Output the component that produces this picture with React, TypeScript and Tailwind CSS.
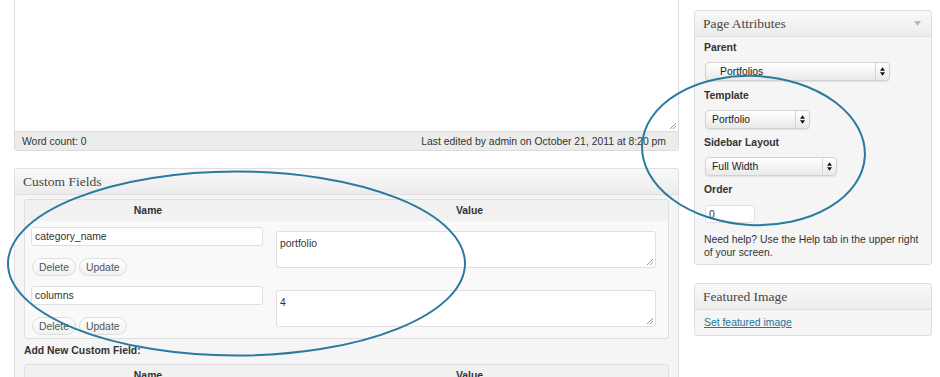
import React from "react";

function Grip({ className }: { className?: string }) {
  return (
    <svg className={className} width="8" height="8" viewBox="0 0 8 8">
      <path d="M1 7 L7 1 M4 7 L7 4" stroke="#9a9a9a" strokeWidth="1" fill="none" />
    </svg>
  );
}

function Arrows() {
  return (
    <svg width="5" height="9" viewBox="0 0 5 9">
      <path d="M0 3.8 L2.5 0.3 L5 3.8 Z M0 5.2 L2.5 8.7 L5 5.2 Z" fill="#111" />
    </svg>
  );
}

function Select({ className, text, textClass }: { className: string; text: string; textClass: string }) {
  return (
    <div
      className={`ml-[1px] h-[19px] flex items-stretch rounded-[4px] border border-[#d2d2d2] bg-linear-to-b from-[#ffffff] to-[#e9e9e9] shadow-[0_1px_1px_rgba(0,0,0,0.08)] ${className}`}
    >
      <div className={`flex-1 flex items-center text-[#222] ${textClass}`}>{text}</div>
      <div className="w-[14px] border-l border-[#d6d6d6] flex items-center justify-center">
        <Arrows />
      </div>
    </div>
  );
}

function Btn({ label }: { label: string }) {
  return (
    <div className="h-[18px] px-[6px] flex items-center rounded-full border border-[#dedede] bg-linear-to-b from-[#fefefe] to-[#f1f1f1] text-[#555]">
      {label}
    </div>
  );
}

function TextArea({ text }: { text: string }) {
  return (
    <div className="relative h-[37px] rounded-[3px] border border-[#dfdfdf] bg-white px-[3px] pt-[5px] text-[#333]">
      {text}
      <Grip className="absolute right-[1px] bottom-[1px]" />
    </div>
  );
}

function FieldRow({ name, value, pt }: { name: string; value: string; pt: string }) {
  return (
    <div className={`flex ${pt}`}>
      <div className="w-[246px] pl-[6px] pr-[8px]">
        <div className="h-[19px] w-[232px] rounded-[3px] border border-[#dfdfdf] bg-white flex items-center pl-[3px] text-[#333]">
          {name}
        </div>
        <div className="flex gap-[3px] mt-[12px] ml-[1px]">
          <Btn label="Delete" />
          <Btn label="Update" />
        </div>
      </div>
      <div className="flex-1 pl-[5px] pr-[12px] pt-[4px]">
        <TextArea text={value} />
      </div>
    </div>
  );
}

function BoxHeader({ title, arrow }: { title: string; arrow?: boolean }) {
  return (
    <div className="h-[26px] flex items-center justify-between pl-[8px] pr-[10px] border-b border-[#dfdfdf] bg-linear-to-b from-[#f9f9f9] to-[#ececec] rounded-t-[3px]">
      <span className="font-['Liberation_Serif',Georgia,serif] text-[13.5px] text-[#464646]">{title}</span>
      {arrow && (
        <svg width="7" height="5" viewBox="0 0 7 5">
          <path d="M0 0 L7 0 L3.5 5 Z" fill="#b8b8b8" />
        </svg>
      )}
    </div>
  );
}

export default function App() {
  return (
    <div className="relative w-[940px] h-[377px] overflow-hidden bg-white font-['Liberation_Sans',Arial,sans-serif] text-[10.4px] leading-[13px] text-[#333]">
      <div className="flex pl-[14px] gap-[15px]">
        {/* Left column */}
        <div className="w-[665px] flex flex-col">
          {/* Editor */}
          <div className="border-x border-b border-[#dcdcdc] rounded-b-[3px]">
            <div className="relative h-[131px] bg-white">
              <Grip className="absolute right-[1px] bottom-[1px]" />
            </div>
            <div className="h-[19px] flex items-center justify-between pl-[7px] pr-[12px] bg-[#ececec] border-t border-[#dcdcdc] text-[#333]">
              <span>Word count: 0</span>
              <span>Last edited by admin on October 21, 2011 at 8:20 pm</span>
            </div>
          </div>

          {/* Custom Fields */}
          <div className="mt-[17px] border border-[#dfdfdf] rounded-[3px] bg-[#f5f5f5]">
            <BoxHeader title="Custom Fields" />
            <div className="px-[9px] pt-[4px]">
              <div className="border border-[#dfdfdf] rounded-[3px] bg-[#f9f9f9]">
                <div className="h-[21px] flex bg-[#f1f1f1] font-bold text-[#333] rounded-t-[3px]">
                  <div className="w-[246px] flex items-center justify-center">Name</div>
                  <div className="flex-1 flex items-center justify-center">Value</div>
                </div>
                <FieldRow name="category_name" value="portfolio" pt="pt-[6px]" />
                <FieldRow name="columns" value="4" pt="pt-[10px]" />
                <div className="h-[3px]" />
              </div>
              <div className="mt-[5px] font-bold text-[#333]">Add New Custom Field:</div>
              <div className="mt-[7px] border border-[#dfdfdf] rounded-[3px] bg-[#f9f9f9]">
                <div className="h-[21px] flex bg-[#f1f1f1] font-bold text-[#333] rounded-t-[3px]">
                  <div className="w-[246px] flex items-center justify-center">Name</div>
                  <div className="flex-1 flex items-center justify-center">Value</div>
                </div>
                <div className="h-[40px]" />
              </div>
            </div>
          </div>
        </div>

        {/* Right column */}
        <div className="w-[238px] pt-[10px] flex flex-col">
          <div className="border border-[#dfdfdf] rounded-[3px] bg-[#f5f5f5]">
            <BoxHeader title="Page Attributes" arrow />
            <div className="pl-[9px] pr-[9px] pt-[4px] pb-[5px]">
              <div className="font-bold">Parent</div>
              <div className="mt-[8px]">
                <Select className="w-[185px]" text="Portfolios" textClass="pl-[14px]" />
              </div>
              <div className="mt-[8px] font-bold">Template</div>
              <div className="mt-[8px]">
                <Select className="w-[105px]" text="Portfolio" textClass="pl-[6px]" />
              </div>
              <div className="mt-[7px] font-bold">Sidebar Layout</div>
              <div className="mt-[8px]">
                <Select className="w-[132px]" text="Full Width" textClass="pl-[6px]" />
              </div>
              <div className="mt-[7px] font-bold">Order</div>
              <div className="mt-[9px] ml-[1px] h-[18px] w-[50px] rounded-[3px] border border-[#dfdfdf] bg-white flex items-center pl-[3px]">
                0
              </div>
              <p className="mt-[10px]">Need help? Use the Help tab in the upper right of your screen.</p>
            </div>
          </div>

          <div className="mt-[18px] border border-[#dfdfdf] rounded-[3px] bg-[#f5f5f5]">
            <BoxHeader title="Featured Image" />
            <div className="pl-[9px] h-[25px] flex items-center">
              <span className="text-[#21759b] underline">Set featured image</span>
            </div>
          </div>
        </div>
      </div>

      {/* Annotation ellipses */}
      <svg className="absolute inset-0 pointer-events-none" width="940" height="377" viewBox="0 0 940 377">
        <ellipse cx="236.5" cy="263.5" rx="228.5" ry="92" fill="none" stroke="#2a7a9e" strokeWidth="2" />
        <ellipse cx="753.5" cy="150.5" rx="111.5" ry="74.5" fill="none" stroke="#2a7a9e" strokeWidth="2" transform="rotate(3 753.5 150.5)" />
      </svg>
    </div>
  );
}
